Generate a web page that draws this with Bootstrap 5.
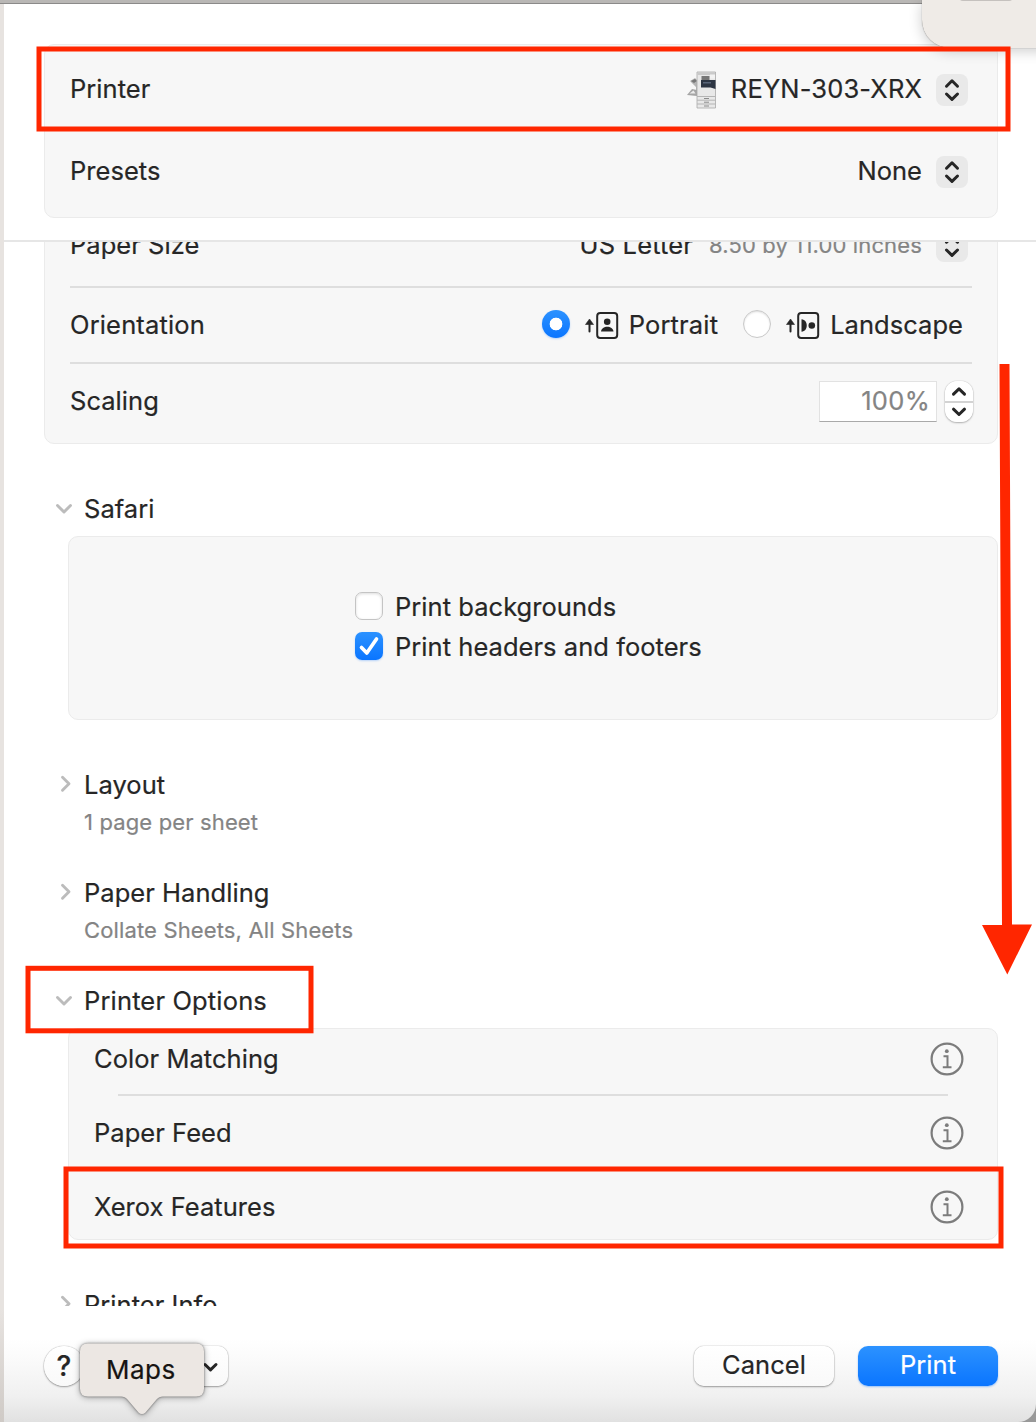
<!DOCTYPE html>
<html lang="en">
<head>
<meta charset="utf-8">
<meta name="viewport" content="width=device-width, initial-scale=1">
<title>Print</title>
<link href="https://cdn.jsdelivr.net/npm/bootstrap@5.3.0/dist/css/bootstrap.min.css" rel="stylesheet">
<style>
  body { width: 1036px; height: 1422px; font-family: Inter, "Liberation Sans", sans-serif; font-size: 25.5px; line-height: 32px; letter-spacing: .04px; color: #262626; background: #fff; white-space: nowrap; -webkit-text-stroke: .2px currentColor; }
  .edge-top { height: 4px; background: #b9b7b5; border-bottom: 1px solid #8b8a89; }
  .edge-left { width: 4px; background: linear-gradient(#e7e3e0 92%, #cfcac6); }
  .sheet { width: 1032px; }
  .head-area { height: 236px; padding: 40px 38px 0 40px; }
  .panel { background: #f7f7f7; border: 1px solid #ebebeb; border-radius: 10px; }
  .head-area .panel { height: 174px; padding: 4px 29px 0 25px; }
  .head-row { height: 82px; }
  .scroll-area { height: 1066px; border-top: 2px solid #e6e6e6; padding: 0 38px 0 40px; }
  .paper-panel { height: 242px; margin-top: -40px; padding: 0 25px; }
  .size-row { height: 83px; padding: 2px 4px 0 0; }
  .orient-row { height: 74px; padding-right: 9px; }
  .orient-row svg { margin: 0 10px 0 15px; }
  .scale-row { height: 74px; margin-right: -1px; }
  .rule { height: 2px; background: #dedede; flex: none; }
  .up1 { margin-top: -2px; }
  .picker { width: 32px; height: 32px; border-radius: 8px; background: #e9e9e9; margin-left: 14px; flex: none; }
  .picker svg, .sec svg, .opt svg { display: block; }
  .soft { color: #848484; }
  .note { font-size: 22px; line-height: 28px; letter-spacing: .14px; }
  .wide { letter-spacing: .15px; }
  .dot { width: 28px; height: 28px; border-radius: 50%; border: 1px solid #c9c9c9; background: #fff; box-shadow: inset 0 1px 2px #0002; flex: none; }
  .dot-on { border: 0; background: radial-gradient(circle, #fff 6px, transparent 6.7px), linear-gradient(#2c92ff, #0a75ff); box-shadow: 0 1px 2px #0a75ff44; }
  .dot-next { margin-left: 25px; }
  .amount { width: 118px; height: 41px; border: 1px solid #e2e2e2; border-bottom: 1px solid #a9a9a9; background: #fff; padding-right: 6px; letter-spacing: .3px; }
  .stepper { width: 28px; height: 41px; border-radius: 12px; background: linear-gradient(#fff 20px, #d3d3d3 20px, #d3d3d3 22px, #fff 22px); box-shadow: 0 0 1px #0006, 0 1px 2px #0004; }
  .sec { height: 32px; padding-left: 12px; }
  .sec svg { width: 28px; flex: none; }
  .sec-next { margin-top: 49px; }
  .sec-close { margin-top: 41px; }
  .sub { margin: 7px 0 0 40px; }
  .indent { margin: 11px 0 0 24px; }
  .tick { width: 28px; height: 28px; border-radius: 7px; border: 1px solid #c4c4c4; background: #fff; box-shadow: inset 0 1px 3px #0002; flex: none; margin-top: 1px; }
  .tick-on { border: 0; background: linear-gradient(#2c92ff, #0a75ff); box-shadow: 0 1px 2px #0a75ff44; }
  .safari-panel { height: 184px; padding: 54px 0 0 286px; }
  .tick-row { height: 40px; }
  .opt-panel { height: 212px; padding: 0 33px 0 25px; }
  .opt { height: 72px; padding-top: 2px; }
  .opt-first { height: 65px; padding: 0 0 6px; }
  .opt-panel .rule { margin: 0 16px 0 24px; }
  .foot { height: 116px; padding: 40px 38px 0 40px; background: linear-gradient(#fff 28%, #fafafa 48%, #f0f0f0 78%, #e1e1e1); border-bottom-right-radius: 18px; }
  .foot-wrap { background: #999; }
  .push { height: 40px; width: 140px; border-radius: 10px; background: linear-gradient(#fff, #f9f9f9); box-shadow: 0 0 1px #0008, 0 1px 2px #0005; line-height: 38px; text-align: center; }
  .push-main { color: #fff; background: linear-gradient(#2c92ff, #0a75ff); box-shadow: 0 1px 2px #0a75ff66; margin-left: 24px; }
  .push-menu { margin-left: 4px; }
  .round { width: 40px; border-radius: 50%; line-height: 41px; font-size: 28px; font-weight: 500; }
  .corner { left: 922px; top: 0; width: 150px; height: 48px; background: #efebe7; border-bottom-left-radius: 28px; box-shadow: 0 0 1px #0008, 0 3px 14px #0003; }
  .corner-tab { left: 36px; top: -9px; width: 56px; height: 10px; background: #ddd9d6; border-bottom: 1px solid #c5c1be; border-radius: 8px; }
  .marks { left: 0; top: 0; }
  .bubble { left: 70px; top: 1334px; }
  .bubble-label { left: 106px; top: 1354px; font-size: 26px; color: #161412; letter-spacing: .5px; }
</style>
</head>
<body class="position-relative overflow-hidden">
<div class="edge-top"></div>
<div class="d-flex">
  <div class="edge-left"></div>
  <main class="sheet">
    <header class="head-area">
      <div class="panel">
        <div class="head-row d-flex align-items-center">
          <span class="up1 me-auto">Printer</span>
          <svg width="30" height="38" viewBox="0 0 30 38" style="margin-right:14px">
            <path d="M3 10l5-3 3 3v13H9v-7z" fill="#b5b5b5"/><path d="M4 10l4-2 2 2-3 2z" fill="#777"/><path d="M0 24l5-6 5 1v6z" fill="#a5a5a5"/><path d="M2.500 22.500l4-3 2 3z" fill="#ececec"/>
            <path d="M10 1h18.500v36H10z" fill="#e8e8e8" stroke="#a8a8a8" stroke-width=".8"/><path d="M10.500 1.500h17.500v2.500H10.500z" fill="#c9c9c9"/><path d="M14.500 5h8v5h-8z" fill="#777"/><path d="M23 3.500h5v4h-5z" fill="#f2f2f2"/>
            <path d="M14 9h14.500v9l-5-1.500H14z" fill="#2d3543"/><path d="M16 11h8v1.500h-8z" fill="#596579"/><path d="M10 25.500h18.500M10 29.200h18.500M10 33h18.500" stroke="#b4b4b4"/><path d="M17 27.500h5M17 31.200h5M17 35h5" stroke="#8a8a8a"/>
          </svg>
          <span class="up1 wide">REYN-303-XRX</span>
          <span class="picker"><svg width="32" height="32" fill="none" stroke="#262626" stroke-width="3" stroke-linecap="round" stroke-linejoin="round"><path d="M10.500 12.200L16 6.800l5.500 5.400M10.500 20L16 25.400l5.500-5.400"/></svg></span>
        </div>
        <div class="head-row d-flex align-items-center">
          <span class="up1 me-auto">Presets</span>
          <span class="up1">None</span>
          <span class="picker"><svg width="32" height="32" fill="none" stroke="#262626" stroke-width="3" stroke-linecap="round" stroke-linejoin="round"><path d="M10.500 12.200L16 6.800l5.500 5.400M10.500 20L16 25.400l5.500-5.400"/></svg></span>
        </div>
      </div>
    </header>
    <section class="scroll-area overflow-hidden">
      <div class="panel paper-panel d-flex flex-column">
        <div class="size-row d-flex align-items-center">
          <span class="up1 me-auto">Paper Size</span><span class="up1 me-3 wide">US Letter</span><span class="note soft up1">8.50 by 11.00 inches</span>
          <span class="picker"><svg width="32" height="32" fill="none" stroke="#262626" stroke-width="3" stroke-linecap="round" stroke-linejoin="round"><path d="M10.500 12.200L16 6.800l5.500 5.400M10.500 20L16 25.400l5.500-5.400"/></svg></span>
        </div>
        <div class="rule"></div>
        <div class="orient-row d-flex align-items-center">
          <span class="me-auto wide">Orientation</span>
          <span class="dot dot-on up1"></span>
          <svg width="34" height="30" viewBox="0 0 34 30"><path d="M4.500 21.500V12" stroke="#262626" stroke-width="2" stroke-linecap="round"/><path d="M.5 14.500L4.500 9l4 5.500z" fill="#262626" stroke="#262626" stroke-width=".6" stroke-linejoin="round"/><rect x="12.200" y="3" width="20" height="25" rx="3" fill="none" stroke="#262626" stroke-width="2"/><circle cx="22.200" cy="11.700" r="3.300" fill="#262626"/><path d="M16 21.500c.5-6.500 12-6.500 12.500 0z" fill="#262626"/></svg>
          <span class="wide">Portrait</span>
          <span class="dot up1 dot-next"></span>
          <svg width="34" height="30" viewBox="0 0 34 30"><path d="M4.500 21.500V12" stroke="#262626" stroke-width="2" stroke-linecap="round"/><path d="M.5 14.500L4.500 9l4 5.500z" fill="#262626" stroke="#262626" stroke-width=".6" stroke-linejoin="round"/><rect x="12.200" y="3" width="20" height="25" rx="3" fill="none" stroke="#262626" stroke-width="2"/><circle cx="25.800" cy="15.500" r="3.300" fill="#262626"/><path d="M15.500 9.200c7 .5 7 12 0 12.500z" fill="#262626"/></svg>
          <span>Landscape</span>
        </div>
        <div class="rule"></div>
        <div class="scale-row d-flex align-items-center">
          <span class="me-auto">Scaling</span>
          <span class="amount soft d-flex align-items-center justify-content-end">100%</span>
          <span class="stepper ms-2"><svg class="d-block" width="28" height="42" fill="none" stroke="#262626" stroke-width="3" stroke-linecap="round" stroke-linejoin="round"><path d="M8.500 13.200l5.500-5.300 5.500 5.300M8.500 28.200l5.500 5.300 5.500-5.300"/></svg></span>
        </div>
      </div>
      <div class="sec sec-next d-flex align-items-center"><svg height="20" fill="none" stroke="#bcbcbc" stroke-width="2.900" stroke-linecap="round" stroke-linejoin="round"><path d="M1.500 6.500L8 13l6.500-6.500"/></svg><span>Safari</span></div>
      <div class="panel safari-panel indent">
        <div class="tick-row d-flex align-items-start gap-2"><span class="tick me-1"></span><span>Print backgrounds</span></div>
        <div class="tick-row d-flex align-items-start gap-2"><span class="tick tick-on me-1"><svg class="d-block" width="28" height="28" fill="none" stroke="#fff" stroke-width="3.700" stroke-linecap="round" stroke-linejoin="round"><path d="M6.500 15.500l5.300 5.500L21.500 7"/></svg></span><span>Print headers and footers</span></div>
      </div>
      <div class="sec sec-next d-flex align-items-center"><svg height="20" fill="none" stroke="#bcbcbc" stroke-width="2.900" stroke-linecap="round" stroke-linejoin="round"><path d="M6.500 2.300l6.500 6.500-6.500 6.500"/></svg><span>Layout</span></div>
      <div class="note soft sub">1 page per sheet</div>
      <div class="sec sec-close d-flex align-items-center"><svg height="20" fill="none" stroke="#bcbcbc" stroke-width="2.900" stroke-linecap="round" stroke-linejoin="round"><path d="M6.500 2.300l6.500 6.500-6.500 6.500"/></svg><span>Paper Handling</span></div>
      <div class="note soft sub">Collate Sheets, All Sheets</div>
      <div class="sec sec-close d-flex align-items-center"><svg height="20" fill="none" stroke="#bcbcbc" stroke-width="2.900" stroke-linecap="round" stroke-linejoin="round"><path d="M1.500 6.500L8 13l6.500-6.500"/></svg><span class="wide">Printer Options</span></div>
      <div class="panel opt-panel indent">
        <div class="opt opt-first d-flex align-items-center justify-content-between"><span>Color Matching</span><svg width="34" height="34" fill="none" stroke="#7c7c7c" stroke-width="2.200"><circle cx="17" cy="17" r="15.400"/><circle cx="16.800" cy="9.200" r="1.900" fill="#7c7c7c" stroke="none"/><path d="M13.500 14.300h4V25M12.800 25.200h8.700" stroke-width="2"/></svg></div>
        <div class="rule"></div>
        <div class="opt d-flex align-items-center justify-content-between"><span>Paper Feed</span><svg width="34" height="34" fill="none" stroke="#7c7c7c" stroke-width="2.200"><circle cx="17" cy="17" r="15.400"/><circle cx="16.800" cy="9.200" r="1.900" fill="#7c7c7c" stroke="none"/><path d="M13.500 14.300h4V25M12.800 25.200h8.700" stroke-width="2"/></svg></div>
        <div class="rule"></div>
        <div class="opt d-flex align-items-center justify-content-between"><span>Xerox Features</span><svg width="34" height="34" fill="none" stroke="#7c7c7c" stroke-width="2.200"><circle cx="17" cy="17" r="15.400"/><circle cx="16.800" cy="9.200" r="1.900" fill="#7c7c7c" stroke="none"/><path d="M13.500 14.300h4V25M12.800 25.200h8.700" stroke-width="2"/></svg></div>
      </div>
      <div class="sec sec-next d-flex align-items-center"><svg height="20" fill="none" stroke="#bcbcbc" stroke-width="2.900" stroke-linecap="round" stroke-linejoin="round"><path d="M6.500 2.300l6.500 6.500-6.500 6.500"/></svg><span>Printer Info</span></div>
    </section>
    <div class="foot-wrap">
      <footer class="foot d-flex align-items-start">
        <div class="push round">?</div>
        <div class="push push-menu me-auto d-flex justify-content-end"><svg width="36" height="40" fill="none" stroke="#262626" stroke-width="3" stroke-linecap="round" stroke-linejoin="round"><path d="M13 18.500l5.500 5.300 5.500-5.300"/></svg></div>
        <div class="push">Cancel</div>
        <div class="push push-main">Print</div>
      </footer>
    </div>
  </main>
</div>
<div class="corner position-absolute"><div class="corner-tab position-absolute"></div></div>
<svg class="bubble position-absolute" width="150" height="88"><path d="M18 9.500h108q8 0 8 8V54.500q0 8-8 8H93q-4 0-6.500 3l-11 13q-3.500 3-7 0l-11-13q-2.500-3-6.500-3H18q-8 0-8-8V17.500q0-8 8-8z" fill="#ece7e3" style="filter:drop-shadow(0 0 1px #0007) drop-shadow(0 1px 3px #0005)"/></svg>
<span class="bubble-label position-absolute">Maps</span>
<svg class="marks position-absolute" width="1036" height="1422" fill="none" stroke="#ff2600" stroke-width="5">
  <rect x="39" y="49" width="969" height="80"/>
  <rect x="28" y="968.300" width="283" height="62.500"/>
  <rect x="66" y="1169" width="935" height="77"/>
  <path d="M999.500 364h10l2.500 560.500h20L1007.300 974.500 982 925h20z" fill="#ff2600" stroke="none"/>
</svg>
<script src="https://cdn.jsdelivr.net/npm/bootstrap@5.3.0/dist/js/bootstrap.bundle.min.js"></script>
</body>
</html>
